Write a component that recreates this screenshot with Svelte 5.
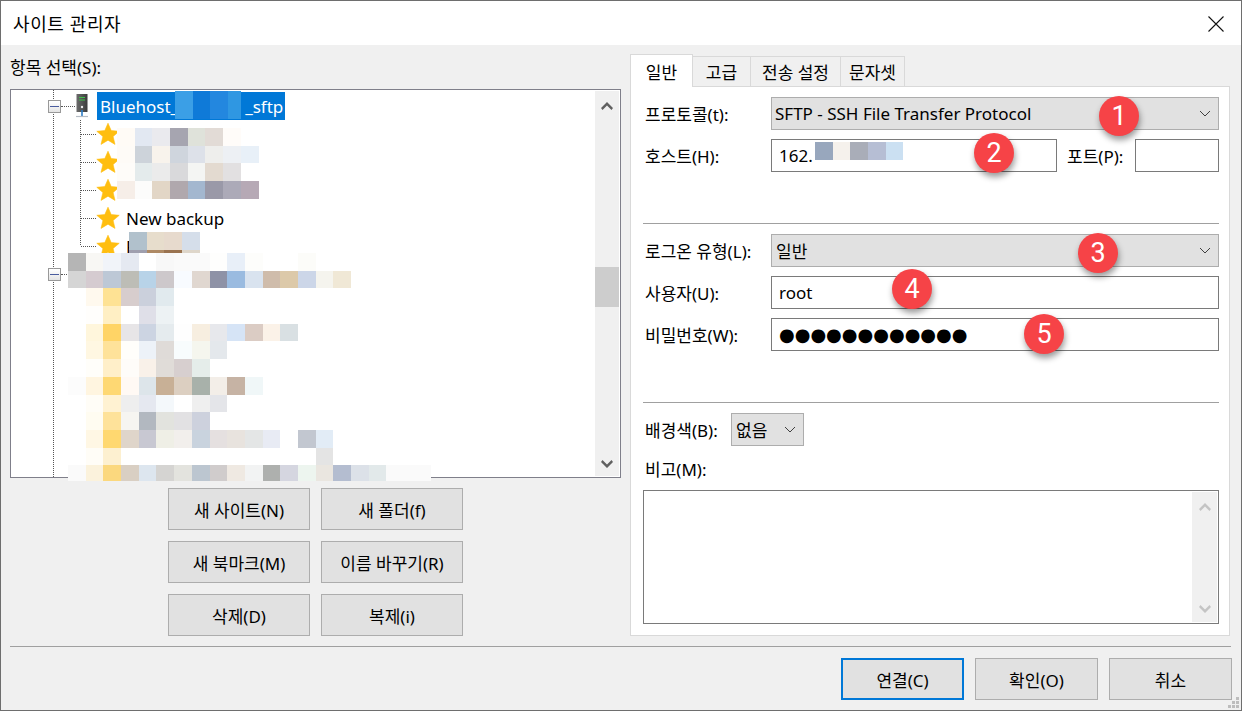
<script>
  const mosaicA = [
    ['fffbf6','e2e8f2','eaeaee','a6a5b0','dfe2da','e2dbd6','fffcf9','ffffff'],
    ['fefbf7','cdd3da','f8f3ec','cfd5dd','dde1e9','eeeeec','edf0f4','e8f0f8'],
    ['fefcf9','e4ebec','ebebeb','d9d9db','f4f5f3','e3dad0','e2e0e1','ffffff'],
    ['f6eee8','fcfcfb','e2d6c6','b0a8ad','a3b7cf','9a99a8','acaab8','b6a9b5']
  ];
  const mosaicB = [
    ['b1c1cc','e7ddcc','e7dacd','d5deea'],
    ['9f9fae','ae8a65','9a7350','ded6ca']
  ];
  const mosaicC = [
    ['b5b5b5','f8f7f4','f1f4f9','e5e9f1','ffffff','f8f8f8','fafafa','fafafa','fefefd','e8eff8','fdfdfb','ffffff','ffffff','fcfcf9'],
    ['d5d5d5','d5cbd0','bdc8d6','bdbdb6','b8d3e8','cdc8cb','f8fbff','e0d7d0','8e92a6','9abbe0','d9e3ef','cfbcab','dcc9a9','ccd6e8','f5f4ee','f0e8d6'],
    ['ffffff','fff9ee','fee294','d7cdcd','cbd0dc','e1eaee'],
    ['ffffff','fffefc','ffefc4','ffffff','dfdfe8','edf2f4'],
    ['ffffff','fff6dc','ffd466','e7e5e7','ccd4e2','e5ebee','fefefe','f7eee0','e7e8ec','d6e4f6','dbccc4','fbf2e8','d9e0e3'],
    ['ffffff','fff7e2','fee29a','fffefb','edf2f8','dfdbd8','f8fcfd','f5f6ee','e4e8ec'],
    ['ffffff','fffefa','ffefc9','fefcf9','f9f1e9','e0dcd8','d7cfcf','e5edea'],
    ['fcfcfc','fff5e0','fed873','fff9f4','dde5ea','c8b096','dccfc1','a8b1aa','f3eee8','c6b3a4','f0f7f8'],
    ['ffffff','fffdf7','fff2d2','eeeeee','e5e8f0','f4f8fb','ffffff','efefef','e4e5e9'],
    ['ffffff','fffcf1','fee29a','f6f5f1','b2b8c0','e2e3de','e2e1e3','cdd1dd'],
    ['ffffff','fff7e4','ffd870','dfd5ca','c8c8d2','efefe6','f2efec','c9d3de','e5e0e0','e8e3de','e4e6e6','e8ebf4','ffffff','c2c7d0','e2ecf6'],
    ['ffffff','fffdf7','fdf0d0','ffffff','ffffff','ffffff','ffffff','ffffff','ffffff','ffffff','ffffff','ffffff','ffffff','ffffff','e4e4e4'],
    ['fafafa','fbf2dc','fbd87e','d9cfc3','dde6ef','d5d4d2','e3e3de','bcc6d0','d0cccc','efe9e2','f2f3f3','aeb0ae','d5d6e0','edf5ef','eae6e0','b4bdd0','dce1e8','e2e9ea','fafafa','fafafa','fafafa']
  ];
  const mosaicHost = [['98a7bd','f5f1ec','a9adb8','b6bed4','cbe0f2']];
  const selCells = ['3b9fe6','0f7ad8','2387df','2f97e2'];
  const flat = (rows, n) => rows.flatMap((r) => Array.from({ length: n }, (_, i) => r[i] ?? 'ffffff'));
  const items = ['', '', '', 'New backup', 'F'];
  const leftButtons = ['새 사이트(N)', '새 폴더(f)', '새 북마크(M)', '이름 바꾸기(R)', '삭제(D)', '복제(i)'];
  const badges = [1, 2, 3, 4, 5];
</script>

{#snippet chevron()}
  <svg class="chev" viewBox="0 0 12 7" width="12" height="7"><path d="M1 1l5 5 5-5" fill="none" stroke="#404040" stroke-width="1"/></svg>
{/snippet}
{#snippet star()}
  <svg class="star" viewBox="0 0 24 24" width="24" height="24"><path d="M12 1.2l3.2 7.4 8 .7-6.1 5.2 1.9 7.9L12 18.2l-7 4.2 1.9-7.9L.8 9.3l8-.7z" fill="#ffbe10" stroke="#ffbe10" stroke-linejoin="round" stroke-width=".6"/></svg>
{/snippet}
{#snippet scrollbtn(up)}
  <svg class="arrow" viewBox="0 0 12 8" width="12" height="8"><path d={up ? 'M0 6l6-6 6 6-1.5 2L6 3.5 1.5 8z' : 'M0 2l6 6 6-6-1.5-2L6 4.5 1.5 0z'}/></svg>
{/snippet}

<div class="window">
  <header class="titlebar">
    <span class="title">사이트 관리자</span>
    <svg class="close" viewBox="0 0 16 16" width="16" height="16"><path d="M.5.5l15 15M15.5.5l-15 15" stroke="#111" stroke-width="1.1" fill="none"/></svg>
  </header>

  <main class="body">
    <div class="columns">
      <section class="left">
        <div class="pick-label">항목 선택(S):</div>
        <div class="listbox">
          <div class="tree">
            <div class="row root">
              <span class="expander"></span>
              <svg class="server" viewBox="0 0 14 24" width="14" height="24">
                <defs><linearGradient id="srv" x1="0" x2="1" y1="0" y2="0"><stop offset="0" stop-color="#6b6b6b"/><stop offset="1" stop-color="#3c3c3c"/></linearGradient></defs>
                <rect x="1.5" y="0" width="11" height="18" fill="url(#srv)"/>
                <path d="M4 3.5h6M4 6h6" stroke="#3fc24a" stroke-width="1.2"/>
                <circle cx="7" cy="13" r="1.2" fill="#eee"/>
                <path d="M7 16v6" stroke="#2b7cc6" stroke-width="1.6"/>
                <path d="M1 22.5h12" stroke="#b5bcc5" stroke-width="1.2"/>
              </svg>
              <span class="selected">Bluehost_<span class="sel-gap"></span>_sftp</span>
            </div>
            {#each items as item}
              <div class="row child">
                {@render star()}
                <span class="item-text">{item}</span>
              </div>
            {/each}
            <div class="row root">
              <span class="expander"></span>
            </div>
          </div>
          <div class="scrollbar">
            {@render scrollbtn(true)}
            <span class="thumb"></span>
            {@render scrollbtn(false)}
          </div>

          <i class="vline v1"></i>
          <i class="vline v2"></i>
          <div class="mosaic sel">
            {#each selCells as c}<i style="background:#{c}"></i>{/each}
          </div>
          <div class="mosaic ma">
            {#each flat(mosaicA, 8) as c}<i style="background:#{c}"></i>{/each}
          </div>
          <div class="mosaic mb">
            {#each flat(mosaicB, 4) as c}<i style="background:#{c}"></i>{/each}
          </div>
          <div class="mosaic mc">
            {#each flat(mosaicC, 21) as c}<i style="background:#{c}"></i>{/each}
          </div>
        </div>
        <div class="left-buttons">
          {#each leftButtons as b}<button class="btn">{b}</button>{/each}
        </div>
      </section>

      <section class="right">
        <nav class="tabs">
          <span class="tab active">일반</span>
          <span class="tab t2">고급</span>
          <span class="tab t3">전송 설정</span>
          <span class="tab t4">문자셋</span>
        </nav>
        <div class="panel">
          <div class="frow">
            <span class="flabel">프로토콜(t):</span>
            <div class="combo grow"><span>SFTP - SSH File Transfer Protocol</span>{@render chevron()}</div>
          </div>
          <div class="frow">
            <span class="flabel">호스트(H):</span>
            <div class="input host"><span>162.</span>
              <div class="mosaic mh">
                {#each mosaicHost[0] as c}<i style="background:#{c}"></i>{/each}
              </div>
            </div>
            <span class="plabel">포트(P):</span>
            <div class="input port"></div>
          </div>
          <hr class="sep" />
          <div class="frow">
            <span class="flabel">로그온 유형(L):</span>
            <div class="combo grow"><span class="ko">일반</span>{@render chevron()}</div>
          </div>
          <div class="frow">
            <span class="flabel">사용자(U):</span>
            <div class="input grow"><span>root</span></div>
          </div>
          <div class="frow">
            <span class="flabel">비밀번호(W):</span>
            <div class="input grow"><span class="dots">●●●●●●●●●●●●</span></div>
          </div>
          <hr class="sep" />
          <div class="frow">
            <span class="blabel">배경색(B):</span>
            <div class="combo small"><span class="ko">없음</span>{@render chevron()}</div>
          </div>
          <div class="memo-label">비고(M):</div>
          <div class="memo">
            <div class="memo-bar">
              {@render scrollbtn(true)}
              {@render scrollbtn(false)}
            </div>
          </div>
        </div>
      </section>
    </div>

    <hr class="foot-sep" />
    <footer class="footer">
      <button class="btn wide default">연결(C)</button>
      <button class="btn wide">확인(O)</button>
      <button class="btn wide">취소</button>
    </footer>
  </main>

  {#each badges as n}
    <span class="badge b{n}">{n}</span>
  {/each}

  <svg class="grip" viewBox="0 0 12 12" width="12" height="12">
    <path d="M8 0h3v3H8zM4 4h3v3H4zM8 4h3v3H8zM0 8h3v3H0zM4 8h3v3H4zM8 8h3v3H8z" fill="#bdbdbd"/>
  </svg>
</div>

<style>
  :global(body) { margin: 0; background: #f0f0f0; }
  * { box-sizing: border-box; }
  .window {
    position: relative; width: 1242px; height: 711px; overflow: hidden;
    display: flex; flex-direction: column;
    border: 1px solid #6e6e6e; background: #f0f0f0; color: #000;
    font-family: "Noto Sans", "Noto Sans CJK KR", sans-serif; font-size: 17px;
  }
  .titlebar {
    height: 44px; flex: none; background: #fff; display: flex; align-items: center;
    justify-content: space-between; padding: 0 17px 0 12px;
  }
  .title { font-size: 18px; letter-spacing: 0.6px; }
  .close { display: block; margin-top: 1px; }
  .body { flex: 1; display: flex; flex-direction: column; padding-top: 9px; }
  .columns { display: flex; gap: 9px; padding-left: 9px; }
  .left { width: 611px; flex: none; display: flex; flex-direction: column; }
  .pick-label { height: 35px; line-height: 27px; }
  .listbox {
    position: relative; height: 389px; border: 1px solid #7f7f8a; background: #fff;
    display: flex; padding: 1px;
  }
  .tree { flex: 1; padding-top: 1px; }
  .row { height: 28px; display: flex; align-items: center; position: relative; }
  .root { padding-left: 36px; }
  .root::after { content: ""; position: absolute; left: 49px; top: 14px; width: 14px; border-top: 1px dotted #555; }
  .expander {
    width: 13px; height: 13px; border: 1px solid #999; background: linear-gradient(#fff, #e4e4e4);
    position: relative; flex: none; z-index: 1;
  }
  .expander::after { content: ""; position: absolute; left: 1px; right: 1px; top: 5px; border-top: 1px solid #4a5c9e; }
  .server { margin-left: 14px; flex: none; position: relative; z-index: 1; }
  .selected {
    margin-left: 8px; height: 28px; padding: 0 3px; width: 188px; background: #0078d7; color: #fff;
    display: flex; align-items: center; white-space: nowrap;
  }
  .sel-gap { width: 67px; flex: none; }
  .child { padding-left: 84px; }
  .child::before { content: ""; position: absolute; left: 69px; top: 14px; width: 15px; border-top: 1px dotted #555; }
  .star { flex: none; display: block; }
  .item-text { margin-left: 6px; }
  .vline { position: absolute; width: 0; border-left: 1px dotted #555; }
  .v1 { left: 42px; top: 0; height: 387px; }
  .v2 { left: 69px; top: 30px; height: 125px; }

  .scrollbar {
    width: 24px; flex: none; background: #f0f0f0; display: flex; flex-direction: column;
    align-items: center; position: relative;
  }
  .arrow { display: block; fill: #606060; }
  .scrollbar .arrow { position: absolute; }
  .scrollbar .arrow:first-child { top: 11px; }
  .scrollbar .arrow:last-child { bottom: 8px; }
  .thumb { position: absolute; top: 176px; height: 40px; left: 0; right: 0; background: #cdcdcd; }

  .mosaic { position: absolute; display: grid; grid-auto-rows: 17.7px; }
  .mosaic i { display: block; }
  .sel { left: 164px; top: 1px; grid-template-columns: 18px 17px 18px 13px; grid-auto-rows: 28px; }
  .ma { left: 106px; top: 38px; grid-template-columns: repeat(8, 17.7px); }
  .mb { left: 118px; top: 142px; grid-template-columns: repeat(4, 17.7px); }
  .mc {
    left: 57px; top: 163px; width: 363px; height: 228px; overflow: hidden; z-index: 2;
    grid-template-columns: repeat(21, 17.7px);
  }
  .mh { left: 43px; top: 2px; grid-template-columns: repeat(5, 17.7px); grid-auto-rows: 18px; }

  .left-buttons {
    margin-top: 10px; align-self: center; display: grid;
    grid-template-columns: 142px 142px; grid-auto-rows: 42px; column-gap: 11px; row-gap: 11px;
  }
  .btn {
    background: #e1e1e1; border: 1px solid #adadad; padding: 0; color: #000;
    font: inherit; font-size: 17px;
  }
  .wide { width: 123px; height: 42px; }
  .default { border: 2px solid #0078d7; }

  .right { width: 600px; flex: none; }
  .tabs { display: flex; height: 32px; align-items: flex-end; position: relative; z-index: 1; }
  .tab {
    height: 30px; border: 1px solid #d9d9d9; border-left: 0; border-bottom: 0; display: flex;
    align-items: center; justify-content: center; font-size: 17px; background: #f0f0f0;
  }
  .active { width: 63px; height: 33px; margin-bottom: -1px; background: #fff; border-left: 1px solid #d9d9d9; }
  .t2 { width: 58px; }
  .t3 { width: 90px; }
  .t4 { width: 64px; }
  .panel {
    height: 550px; border: 1px solid #d9d9d9; background: #fff; padding: 10px 10px 0 12px;
    display: flex; flex-direction: column;
  }
  .frow { display: flex; align-items: center; height: 33px; margin-bottom: 9px; }
  .flabel { width: 128px; flex: none; padding-left: 2px; white-space: nowrap; }
  .blabel { width: 88px; flex: none; padding-left: 2px; white-space: nowrap; }
  .plabel { width: 78px; flex: none; padding-left: 10px; white-space: nowrap; }
  .combo {
    height: 33px; background: #e1e1e1; border: 1px solid #adadad; display: flex; align-items: center;
    justify-content: space-between; padding: 0 7px 0 3px; position: relative;
  }
  .grow { flex: 1; }
  .small { width: 73px; }
  .ko { padding-left: 1px; }
  .input {
    height: 33px; border: 1px solid #7a7a7a; background: #fff; display: flex; align-items: center;
    padding-left: 7px; position: relative;
  }
  .host { width: 286px; }
  .port { width: 84px; }
  .dots { font-family: "DejaVu Sans", sans-serif; font-size: 18px; letter-spacing: 0; line-height: 1; }
  .sep { width: 100%; height: 1px; margin: 42px 0 10px; border: 0; background: #a0a0a0; flex: none; }
  .memo-label { height: 35px; line-height: 30px; padding-left: 2px; margin-top: 0; }
  .memo { height: 134px; border: 1px solid #7a7a7a; display: flex; justify-content: flex-end; padding: 1px; }
  .memo-bar {
    width: 25px; background: #f0f0f0; display: flex; flex-direction: column; align-items: center;
    justify-content: space-between; padding: 11px 0 9px;
  }
  .memo-bar .arrow { fill: #c4c4c4; }

  .foot-sep { height: 1px; margin: 10px 0 0 9px; width: 1221px; border: 0; background: #a0a0a0; flex: none; }
  .footer { display: flex; justify-content: flex-end; gap: 11px; padding: 11px 9px 0 0; }

  .badge {
    position: absolute; width: 40px; height: 40px; border-radius: 50%; background: #f64347; color: #fff;
    font-family: "Roboto", sans-serif; font-size: 27px; display: flex; align-items: center; justify-content: center;
    box-shadow: 1px 4px 6px rgba(0, 0, 0, 0.4); z-index: 5;
  }
  .b1 { left: 1098px; top: 95px; }
  .b2 { left: 973px; top: 132px; }
  .b3 { left: 1077px; top: 232px; }
  .b4 { left: 891px; top: 268px; }
  .b5 { left: 1023px; top: 313px; }
  .grip { position: absolute; right: 1px; bottom: 1px; }
</style>
